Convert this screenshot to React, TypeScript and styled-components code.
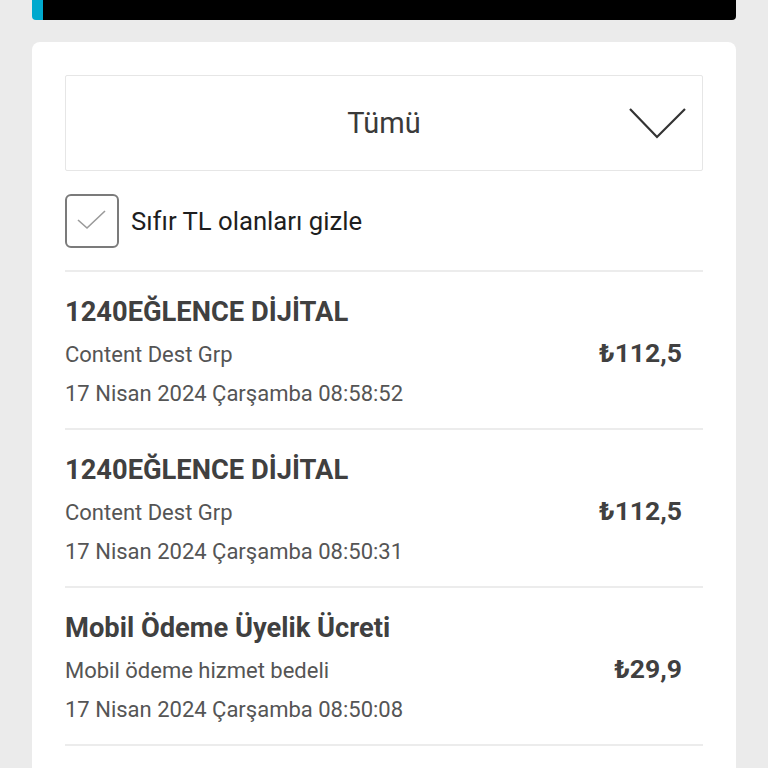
import React from "react";
import styled, { createGlobalStyle } from "styled-components";

const GlobalStyle = createGlobalStyle`
  html, body {
    margin: 0;
    padding: 0;
    background: #ebebeb;
    font-family: Roboto, "Noto Sans", sans-serif;
  }
`;

const Page = styled.div`
  width: 768px;
  height: 768px;
  overflow: hidden;
  padding: 0 32px;
  box-sizing: border-box;
`;

const TopBar = styled.div`
  height: 20px;
  background: #000;
  border-radius: 0 0 4px 4px;
  border-left: 11px solid #00a9ce;
`;

const Card = styled.div`
  margin-top: 22px;
  background: #fff;
  border-radius: 8px;
  padding: 33px 33px 0;
`;

const Select = styled.div`
  height: 96px;
  box-sizing: border-box;
  border: 1px solid #e6e6e6;
  border-radius: 2px;
  display: flex;
  align-items: center;
  justify-content: center;
  position: relative;
  font-size: 29px;
  color: #3a3a3a;
`;

const Chevron = styled.svg`
  position: absolute;
  right: 15px;
  top: 31px;
`;

const CheckRow = styled.label`
  display: flex;
  align-items: center;
  gap: 12px;
  margin: 23px 0 22px;
  font-size: 25.7px;
  color: #1e1e1e;
`;

const Box = styled.span`
  width: 54px;
  height: 54px;
  box-sizing: border-box;
  border: 2px solid #7b7b7b;
  border-radius: 6px;
  display: flex;
  align-items: center;
  justify-content: center;
`;

const Row = styled.div`
  display: flex;
  align-items: center;
  justify-content: space-between;
  border-top: 2px solid #ececec;
  padding: 20px 21px 15px 0;
`;

const Info = styled.div`
  display: flex;
  flex-direction: column;
`;

const Title = styled.div`
  font-size: 27.3px;
  font-weight: 700;
  color: #404040;
  line-height: 40px;
  margin-bottom: 3px;
`;

const Line = styled.div`
  font-size: 22px;
  color: #555;
  line-height: 39px;
`;

const Amount = styled.div`
  font-size: 26.5px;
  font-weight: 700;
  color: #404040;
`;

const items = [
  { title: "1240EĞLENCE DİJİTAL", sub: "Content Dest Grp", date: "17 Nisan 2024 Çarşamba 08:58:52", amount: "₺112,5" },
  { title: "1240EĞLENCE DİJİTAL", sub: "Content Dest Grp", date: "17 Nisan 2024 Çarşamba 08:50:31", amount: "₺112,5" },
  { title: "Mobil Ödeme Üyelik Ücreti", sub: "Mobil ödeme hizmet bedeli", date: "17 Nisan 2024 Çarşamba 08:50:08", amount: "₺29,9" },
];

export default function App() {
  return (
    <Page>
      <GlobalStyle />
      <TopBar />
      <Card>
        <Select>
          Tümü
          <Chevron width="58" height="32" viewBox="0 0 58 32">
            <polyline points="1,2 28,30 56,2" fill="none" stroke="#333" strokeWidth="2.2" />
          </Chevron>
        </Select>
        <CheckRow>
          <Box>
            <svg width="32" height="24" viewBox="0 0 32 24">
              <polyline points="2,11 11,19 29,2" fill="none" stroke="#9a9a9a" strokeWidth="1.6" />
            </svg>
          </Box>
          Sıfır TL olanları gizle
        </CheckRow>
        {items.map((it, i) => (
          <Row key={i}>
            <Info>
              <Title>{it.title}</Title>
              <Line>{it.sub}</Line>
              <Line>{it.date}</Line>
            </Info>
            <Amount>{it.amount}</Amount>
          </Row>
        ))}
        <Row />
      </Card>
    </Page>
  );
}
